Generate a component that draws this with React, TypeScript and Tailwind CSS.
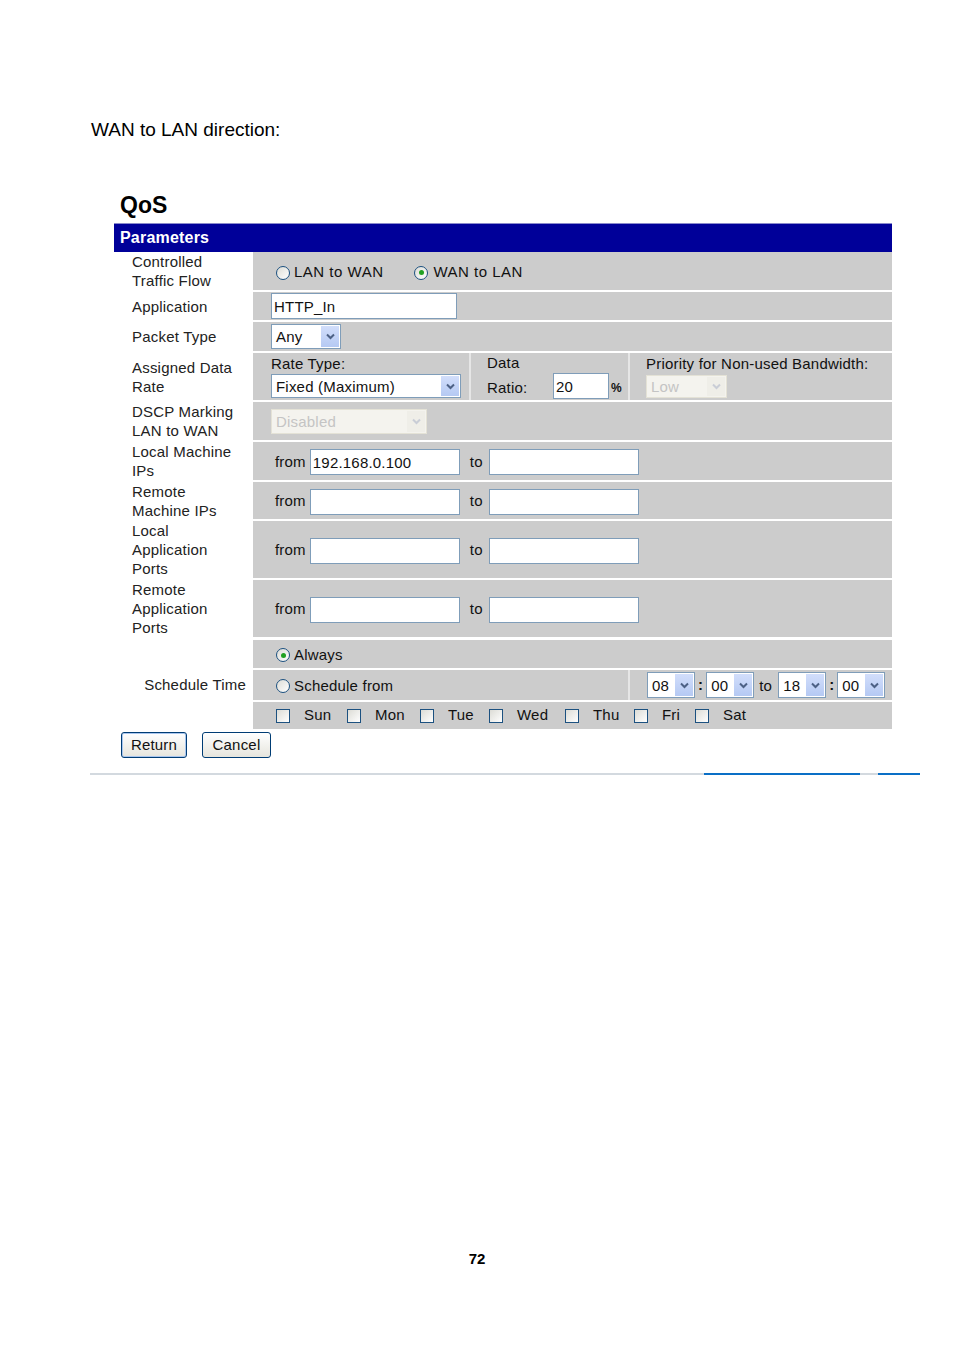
import React from 'react';

const font = { fontFamily: '"Liberation Sans", Arial, sans-serif' };

function Chevron({ disabled }: { disabled?: boolean }) {
  return (
    <svg width="9" height="7" viewBox="0 0 9 7">
      <path
        d="M1 1.5 L4.5 5 L8 1.5"
        fill="none"
        stroke={disabled ? '#c9cdd6' : '#4d6185'}
        strokeWidth="2"
      />
    </svg>
  );
}

function Select({
  value,
  w,
  h = 'h-[25px]',
  disabled,
}: {
  value: string;
  w: string;
  h?: string;
  disabled?: boolean;
}) {
  return (
    <div
      className={`${w} ${h} flex items-stretch border ${
        disabled ? 'border-[#e4e2d6] bg-[#f4f3ee] text-[#c4c4c4]' : 'border-[#7f9db9] bg-white text-[#111]'
      }`}
    >
      <div className="flex-1 flex items-center pl-[4px] leading-none">{value}</div>
      <div
        className={`w-[18px] my-[1px] mr-[1px] flex items-center justify-center ${
          disabled ? 'bg-[#efeee8]' : 'bg-gradient-to-b from-[#d2defb] to-[#b5c9f3]'
        }`}
      >
        <Chevron disabled={disabled} />
      </div>
    </div>
  );
}

function Input({ value = '', w = 'w-[150px]' }: { value?: string; w?: string }) {
  return (
    <div className={`${w} h-[26px] border border-[#7f9db9] bg-white flex items-center pl-[2px] text-[#111] leading-none`}>
      {value}
    </div>
  );
}

function Radio({ checked }: { checked?: boolean }) {
  return (
    <span className="inline-flex shrink-0 w-[14px] h-[14px] rounded-full border border-[#1c5180] bg-gradient-to-br from-[#dcdcd6] to-white items-center justify-center">
      {checked && <span className="w-[5px] h-[5px] rounded-full bg-[#21a121]" />}
    </span>
  );
}

function Check() {
  return <span className="inline-block shrink-0 w-[14px] h-[14px] border border-[#1c5180] bg-gradient-to-br from-[#dcdcd6] to-white" />;
}

function Row({
  label,
  h,
  children,
  className = '',
}: {
  label: React.ReactNode;
  h: string;
  children: React.ReactNode;
  className?: string;
}) {
  return (
    <div className={`flex ${h}`}>
      <div className="w-[139px] shrink-0 flex items-center pl-[18px] leading-[19px] text-[#222]">{label}</div>
      <div className={`flex-1 bg-[#cccccc] flex items-center ${className}`}>{children}</div>
    </div>
  );
}

function FromTo({ from = '' }: { from?: string }) {
  return (
    <>
      <span className="mr-[4px]">from</span>
      <Input value={from} />
      <span className="ml-[10px] mr-[6px]">to</span>
      <Input />
    </>
  );
}

export default function App() {
  const days = ['Sun', 'Mon', 'Tue', 'Wed', 'Thu', 'Fri', 'Sat'];
  const dayGap = ['mr-[43px]', 'mr-[45px]', 'mr-[41px]', 'mr-[48px]', 'mr-[41px]', 'mr-[33px]', ''];

  return (
    <div className="w-[954px] h-[1350px] bg-white relative text-[#111]" style={font}>
      <div className="pt-[119px] pl-[91px] text-[19px] leading-[22px] text-black">WAN to LAN direction:</div>

      <div className="pt-[51px] pl-[120px] text-[23px] font-bold leading-[26px] text-black">QoS</div>

      <div className="ml-[114px] mt-[5px] w-[778px] text-[15px] tracking-[0.2px]">
        <div className="h-[29px] bg-[#000099] flex items-center pl-[6px] text-white font-bold text-[16px] border-t border-[#8a8acc]">
          Parameters
        </div>

        <div className="flex flex-col gap-[2px] bg-white">
          <Row label={<span>Controlled<br />Traffic Flow</span>} h="h-[38px]" className="pl-[23px] pt-[3px]">
            <Radio />
            <span className="ml-[4px] tracking-[0.5px]">LAN to WAN</span>
            <span className="ml-[31px] flex items-center"><Radio checked /></span>
            <span className="ml-[5px] tracking-[0.5px]">WAN to LAN</span>
          </Row>

          <Row label="Application" h="h-[28px]" className="pl-[18px]">
            <Input value="HTTP_In" w="w-[186px]" />
          </Row>

          <Row label="Packet Type" h="h-[29px]" className="pl-[18px]">
            <Select value="Any" w="w-[70px]" />
          </Row>

          <Row label={<span>Assigned Data<br />Rate</span>} h="h-[47px]" className="items-stretch">
            <div className="w-[216px] pl-[18px] flex flex-col pt-[1px]">
              <span className="leading-[19px]">Rate Type:</span>
              <div className="mt-[1px]">
                <Select value="Fixed (Maximum)" w="w-[190px]" h="h-[24px]" />
              </div>
            </div>
            <div className="w-[159px] border-l-2 border-[#e6e6e6] pl-[16px] flex flex-col">
              <span className="leading-[19px]">Data</span>
              <div className="flex items-center mt-[1px]">
                <span className="w-[66px] pt-[4px]">Ratio:</span>
                <Input value="20" w="w-[56px]" />
                <span className="ml-[2px] pt-[4px] text-[12px] font-bold">%</span>
              </div>
            </div>
            <div className="flex-1 border-l-2 border-[#e6e6e6] pl-[16px] flex flex-col pt-[1px]">
              <span className="leading-[19px]">Priority for Non-used Bandwidth:</span>
              <div className="mt-[2px]">
                <Select value="Low" w="w-[81px]" h="h-[23px]" disabled />
              </div>
            </div>
          </Row>

          <Row label={<span>DSCP Marking<br />LAN to WAN</span>} h="h-[38px]" className="pl-[18px]">
            <Select value="Disabled" w="w-[156px]" disabled />
          </Row>

          <Row label={<span>Local Machine<br />IPs</span>} h="h-[38px]" className="pl-[22px] pt-[2px]">
            <FromTo from="192.168.0.100" />
          </Row>

          <Row label={<span>Remote<br />Machine IPs</span>} h="h-[37px]" className="pl-[22px] pt-[2px]">
            <FromTo />
          </Row>

          <Row label={<span>Local<br />Application<br />Ports</span>} h="h-[57px]" className="pl-[22px] pt-[2px]">
            <FromTo />
          </Row>

          <Row label={<span>Remote<br />Application<br />Ports</span>} h="h-[57px]" className="pl-[22px] pt-[2px]">
            <FromTo />
          </Row>

          <div className="flex mt-[1px]">
            <div className="w-[139px] shrink-0 flex items-center justify-end pr-[7px] pt-[2px] text-[#222]">Schedule Time</div>
            <div className="flex-1 flex flex-col gap-[2px]">
              <div className="h-[28px] bg-[#cccccc] flex items-center pl-[23px] pt-[2px]">
                <Radio checked />
                <span className="ml-[4px]">Always</span>
              </div>
              <div className="h-[30px] bg-[#cccccc] flex items-stretch">
                <div className="w-[375px] flex items-center pl-[23px] pt-[2px]">
                  <Radio />
                  <span className="ml-[4px]">Schedule from</span>
                </div>
                <div className="flex-1 border-l-2 border-[#e6e6e6] flex items-center pl-[17px]">
                  <Select value="08" w="w-[48px]" h="h-[26px]" />
                  <span className="mx-[3px] font-bold">:</span>
                  <Select value="00" w="w-[48px]" h="h-[26px]" />
                  <span className="ml-[5px] mr-[6px] mt-[3px]">to</span>
                  <Select value="18" w="w-[48px]" h="h-[26px]" />
                  <span className="mx-[3px] font-bold">:</span>
                  <Select value="00" w="w-[48px]" h="h-[26px]" />
                </div>
              </div>
              <div className="h-[27px] bg-[#cccccc] flex items-center pl-[23px]">
                {days.map((d, i) => (
                  <span key={d} className={`flex items-center ${dayGap[i]}`}>
                    <Check />
                    <span className="ml-[14px] w-0 whitespace-nowrap">{d}</span>
                  </span>
                ))}
              </div>
            </div>
          </div>
        </div>

        <div className="flex gap-[15px] pl-[7px] mt-[3px] text-[15px]">
          <button className="w-[66px] h-[26px] rounded-[3px] border border-[#003c74] bg-gradient-to-b from-white to-[#e6e5dd] text-[#111] shadow-[inset_0_0_0_1px_#a9c6ee]">
            Return
          </button>
          <button className="w-[69px] h-[26px] rounded-[3px] border border-[#003c74] bg-gradient-to-b from-white to-[#e6e5dd] text-[#111]">
            Cancel
          </button>
        </div>
      </div>

      <div className="ml-[90px] mt-[15px] w-[830px] flex h-[2px]">
        <div className="w-[614px] bg-[#d3d9df]" />
        <div className="w-[156px] bg-[#0a6fc6]" />
        <div className="w-[18px] bg-[#d3d9df]" />
        <div className="flex-1 bg-[#0a6fc6]" />
      </div>

      <div className="absolute left-0 right-0 top-[1248px] text-center text-[15px] font-bold text-black">72</div>
    </div>
  );
}
